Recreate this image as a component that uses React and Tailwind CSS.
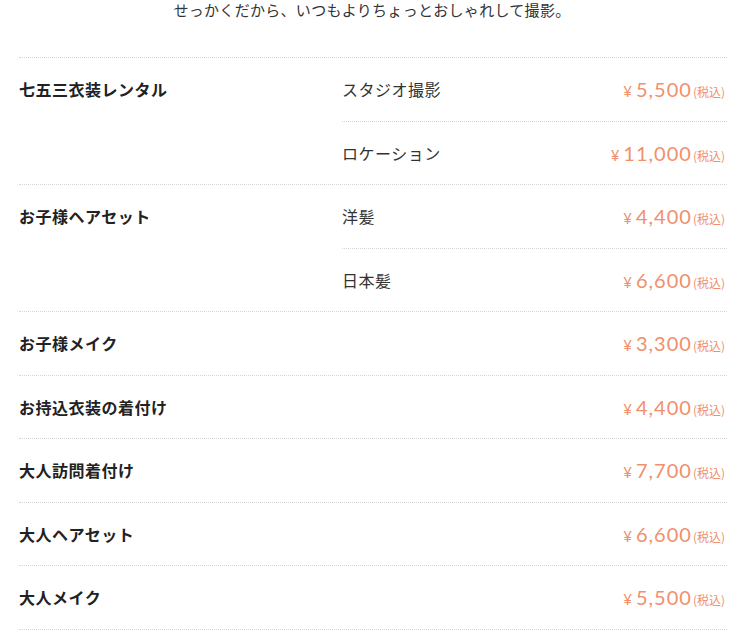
import React from "react";

const groups = [
  { label: "七五三衣装レンタル", items: [["スタジオ撮影", "5,500"], ["ロケーション", "11,000"]] },
  { label: "お子様ヘアセット", items: [["洋髪", "4,400"], ["日本髪", "6,600"]] },
  { label: "お子様メイク", items: [["", "3,300"]] },
  { label: "お持込衣装の着付け", items: [["", "4,400"]] },
  { label: "大人訪問着付け", items: [["", "7,700"]] },
  { label: "大人ヘアセット", items: [["", "6,600"]] },
  { label: "大人メイク", items: [["", "5,500"]] },
];

function Price({ v }) {
  return (
    <div className="flex items-baseline text-[#f0906c] pr-[2px]">
      <span className="font-['Lato','Noto_Sans_CJK_JP',sans-serif] text-[15px] mr-[4px]">¥</span>
      <span className="font-['Lato','Noto_Sans_CJK_JP',sans-serif] text-[20px] tracking-[1px]">{v}</span>
      <span className="ml-[1px] text-[12px] font-['Noto_Sans_CJK_JP',sans-serif]">(税込)</span>
    </div>
  );
}

export default function App() {
  return (
    <div className="w-[750px] h-[636px] overflow-hidden bg-white font-['Noto_Sans_CJK_JP',sans-serif] text-[#222]">
      <p className="pr-[6px] pt-[2px] text-center text-[15px] leading-[16px] tracking-[0.3px] text-[#333]">
        せっかくだから、いつもよりちょっとおしゃれして撮影。
      </p>
      <div className="mx-[19px] mt-[39px] w-[708px] border-t border-dotted border-[#d6d6d6]">
        {groups.map((g, gi) => (
          <div key={gi} className="flex border-b border-dotted border-[#d6d6d6]">
            <div className="w-[323px] shrink-0 h-[62.5px] flex items-center text-[16px] font-bold tracking-[0.5px]">
              {g.label}
            </div>
            <div className="flex-1 flex flex-col">
              {g.items.map(([name, price], i) => (
                <div
                  key={i}
                  className={
                    "flex items-center justify-between " +
                    (i < g.items.length - 1 ? "h-[63.5px] border-b border-dotted border-[#d6d6d6]" : "h-[62.5px]")
                  }
                >
                  <span className="text-[16px] tracking-[0.5px] text-[#333]">{name}</span>
                  <Price v={price} />
                </div>
              ))}
            </div>
          </div>
        ))}
      </div>
    </div>
  );
}
